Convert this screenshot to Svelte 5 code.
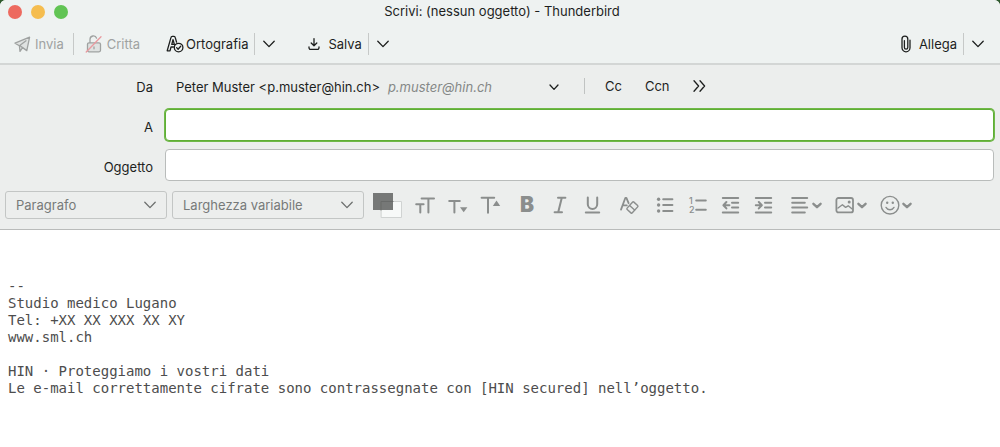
<script lang="ts">
	let from = $state('Peter Muster <p.muster@hin.ch>');
	let to = $state('');
	let subject = $state('');
	let paragraph = $state('Paragrafo');
	let font = $state('Larghezza variabile');
	let body = $state(
		[
			'--',
			'Studio medico Lugano',
			'Tel: +XX XX XXX XX XY',
			'www.sml.ch',
			'',
			'HIN · Proteggiamo i vostri dati',
			'Le e-mail correttamente cifrate sono contrassegnate con [HIN secured] nell’oggetto.',
		].join('\n')
	);
</script>

{#snippet chevron()}
	<svg class="chevron" width="12" height="8" viewBox="0 0 12 8" aria-hidden="true">
		<path d="M0.8 1.2 6 6.6 11.2 1.2" />
	</svg>
{/snippet}

{#snippet smallChevron()}
	<svg class="small-chevron" width="12" height="8" viewBox="0 0 12 8" aria-hidden="true">
		<path d="M2.4 2.8 6 6.2 9.6 2.8" />
	</svg>
{/snippet}

<main class="window">
	<header>
		<div class="titlebar">
			<div class="lights">
				<button class="light close" aria-label="Chiudi"></button>
				<button class="light minimize" aria-label="Riduci"></button>
				<button class="light zoom" aria-label="Ingrandisci"></button>
			</div>
			<h1>Scrivi: (nessun oggetto) - Thunderbird</h1>
		</div>

		<div class="toolbar">
			<button class="tool send" disabled>
				<svg width="17" height="17" viewBox="0 0 17 17" aria-hidden="true">
					<path d="M1 7.2 15.6 1.2 12.8 14.6 8.6 11.6 6 15.4 5.4 9.8Z" fill="#dfe2e1" />
					<path d="M5.4 9.8 12 4.8M8.6 11.6 6.4 10" />
				</svg>
				Invia
			</button>
			<span class="divider"></span>
			<button class="tool encrypt" disabled>
				<svg width="18" height="18" viewBox="0 0 18 18" aria-hidden="true">
					<rect x="2.5" y="7.8" width="13" height="9" rx="1.5" fill="#dfe2e1" />
					<path d="M5 7.6V4.4a3.4 3.4 0 0 1 6.6-1.2M9 12v1.8" />
					<path d="M1.2 17 16 1.8" stroke="#e99a9f" />
				</svg>
				Critta
			</button>
			<button class="tool spelling">
				<svg width="18" height="18" viewBox="0 0 18 18" aria-hidden="true">
					<path d="M1.2 15.8 5 2.4Q5.2 1.4 6.2 1.4H8Q9 1.4 9.2 2.4L10.6 7.2M4 15.8H1.2M4 15.8 5 12h2.4M5.8 9.4 7 4.6l1.4 4.8Z" />
					<circle cx="12.6" cy="12.6" r="4.3" />
					<path d="m10.6 12.6 1.5 1.6 2.6-3" />
				</svg>
				Ortografia
			</button>
			<span class="divider"></span>
			<button class="more" aria-label="Opzioni ortografia">{@render chevron()}</button>
			<button class="tool save">
				<svg width="12" height="14" viewBox="0 0 12 14" aria-hidden="true">
					<path d="M6 1.6v7M3.2 6 6 8.8 8.8 6M1 10v.8A1.6 1.6 0 0 0 2.6 12.4h6.8A1.6 1.6 0 0 0 11 10.8V10" />
				</svg>
				Salva
			</button>
			<span class="divider"></span>
			<button class="more" aria-label="Opzioni salvataggio">{@render chevron()}</button>
			<button class="tool attach">
				<svg width="10" height="18" viewBox="0 0 10 18" aria-hidden="true">
					<path d="M9 5.2v7.6a4 4 0 0 1-8 0V4a2.9 2.9 0 0 1 5.8 0v8.4a1.7 1.7 0 0 1-3.4 0V5.6" />
				</svg>
				Allega
			</button>
			<span class="divider"></span>
			<button class="more" aria-label="Opzioni allegati">{@render chevron()}</button>
		</div>
	</header>

	<section class="compose">
		<div class="fields">
			<label for="from">Da</label>
			<div class="from-row">
				<div class="dropdown identity">
					<select id="from" bind:value={from}>
						<option>Peter Muster &lt;p.muster@hin.ch&gt;</option>
					</select>
					<em>p.muster@hin.ch</em>
					<svg class="chevron" width="10" height="7" viewBox="0 0 10 7" aria-hidden="true">
						<path d="m1 1 4 4.4L9 1" />
					</svg>
				</div>
				<span class="short-divider"></span>
				<button class="recipient">Cc</button>
				<button class="recipient">Ccn</button>
				<button class="recipient" aria-label="Altri campi">
					<svg width="13" height="14" viewBox="0 0 13 14" aria-hidden="true">
						<path d="M1 1.8 5.6 7 1 12.2M7 1.8 11.6 7 7 12.2" />
					</svg>
				</button>
			</div>

			<label for="to">A</label>
			<input id="to" class="active" type="text" bind:value={to} />

			<label for="subject">Oggetto</label>
			<input id="subject" type="text" bind:value={subject} />
		</div>

		<div class="format">
			<div class="dropdown boxed">
				<select class="paragraph" aria-label="Formato paragrafo" bind:value={paragraph}>
					<option>Paragrafo</option>
				</select>
				{@render chevron()}
			</div>
			<div class="dropdown boxed">
				<select class="font" aria-label="Carattere" bind:value={font}>
					<option>Larghezza variabile</option>
				</select>
				{@render chevron()}
			</div>
			<button class="colors" aria-label="Colore del testo">
				<svg width="30" height="26" viewBox="0 0 30 26" aria-hidden="true">
					<rect x="9.5" y="9.5" width="20" height="16" fill="#f7f9f8" stroke="#d0d3d2" stroke-width="1" />
					<rect x="1" y="1" width="20" height="17" fill="#767877" stroke="none" />
					<path d="M9 18V9.5h12" stroke="#686a69" stroke-width="1" />
				</svg>
			</button>

			<div class="group">
				<button aria-label="Dimensione carattere">
					<svg width="22" height="22" viewBox="0 0 22 22" aria-hidden="true">
						<path d="M7.6 4.6H20M14.4 4.6v14M2.2 10.2h7.4M6.3 10.2v8.4" />
					</svg>
				</button>
				<button aria-label="Riduci carattere">
					<svg width="22" height="22" viewBox="0 0 22 22" aria-hidden="true">
						<path d="M2.2 7h10.6M7.4 7v11.6" />
						<path class="solid" d="M13 13.2h7.4l-3.7 5Z" />
					</svg>
				</button>
				<button aria-label="Ingrandisci carattere">
					<svg width="22" height="22" viewBox="0 0 22 22" aria-hidden="true">
						<path d="M1.6 3.8h12.6M8 3.8v15" />
						<path class="solid" d="M12.8 12h7.4l-3.7-5.4Z" />
					</svg>
				</button>
			</div>

			<div class="group">
				<button class="bold" aria-label="Grassetto">B</button>
				<button aria-label="Corsivo">
					<svg width="22" height="22" viewBox="0 0 22 22" aria-hidden="true">
						<path d="M9 3.8h7.4M5.6 18.2H13M12.8 3.8 9.2 18.2" />
					</svg>
				</button>
				<button aria-label="Sottolineato">
					<svg width="22" height="22" viewBox="0 0 22 22" aria-hidden="true">
						<path d="M5.8 3.4v6.8a4.7 4.7 0 0 0 9.4 0V3.4M3.8 18.6h13.4" />
					</svg>
				</button>
			</div>

			<div class="group">
				<button aria-label="Rimuovi formattazione">
					<svg width="22" height="22" viewBox="0 0 22 22" aria-hidden="true">
						<path d="M3 15.6 7.4 3.8h1l2.2 5.4M4.8 11.4h4" stroke-width="1.8" />
						<rect class="thin" x="9.4" y="10" width="10" height="7" rx="1" transform="rotate(-48 14.4 13.5)" />
						<path class="thin" d="m11.6 11.4 5 4.6" />
					</svg>
				</button>
			</div>

			<div class="group">
				<button aria-label="Elenco puntato">
					<svg width="22" height="22" viewBox="0 0 22 22" aria-hidden="true">
						<path d="M9.2 5.2h9.2M9.2 11h9.2M9.2 17h9.2" />
						<circle class="solid" cx="4.6" cy="5.2" r="1.7" />
						<circle class="solid" cx="4.6" cy="11" r="1.7" />
						<circle class="solid" cx="4.6" cy="17" r="1.7" />
					</svg>
				</button>
				<button aria-label="Elenco numerato">
					<svg width="22" height="22" viewBox="0 0 22 22" aria-hidden="true">
						<path d="M9.2 6.4h9.6M9.2 15.8h9.6" />
						<text x="2" y="10">1</text>
						<text x="2" y="19">2</text>
					</svg>
				</button>
				<button aria-label="Riduci rientro">
					<svg width="22" height="22" viewBox="0 0 22 22" aria-hidden="true">
						<path d="M2.8 4h15.4M12 8.8h6.2M12 13.6h6.2M2.8 18.4h15.4M3.6 11.2h5.8M6.4 8 3.4 11.2l3 3.2" />
					</svg>
				</button>
				<button aria-label="Aumenta rientro">
					<svg width="22" height="22" viewBox="0 0 22 22" aria-hidden="true">
						<path d="M2.8 4h15.4M12 8.8h6.2M12 13.6h6.2M2.8 18.4h15.4M2.8 11.2h5.8M5.8 8l3 3.2-3 3.2" />
					</svg>
				</button>
			</div>

			<div class="group">
				<button class="menu" aria-label="Allineamento">
					<svg width="22" height="22" viewBox="0 0 22 22" aria-hidden="true">
						<path d="M3.2 4h15M3.2 8.8h12.6M3.2 13.6h15M3.2 18.4h12.6" />
					</svg>
					{@render smallChevron()}
				</button>
				<button class="menu" aria-label="Inserisci">
					<svg width="22" height="22" viewBox="0 0 22 22" aria-hidden="true">
						<rect x="2.4" y="4" width="16.6" height="14.4" rx="2" stroke-width="1.8" />
						<path class="thin" d="m4 14 4.4-3.2 3.2 2.6 2.6-1.6 4 3.2" />
						<circle class="solid" cx="15.2" cy="8" r="1.5" />
					</svg>
					{@render smallChevron()}
				</button>
				<button class="menu" aria-label="Faccina">
					<svg width="22" height="22" viewBox="0 0 22 22" aria-hidden="true">
						<circle class="thin" cx="11" cy="11.2" r="8.8" />
						<path class="thin" d="M7 13.4a4.6 4.6 0 0 0 8 0" />
						<circle class="solid" cx="8.2" cy="8.8" r="1.2" />
						<circle class="solid" cx="13.8" cy="8.8" r="1.2" />
					</svg>
					{@render smallChevron()}
				</button>
			</div>
		</div>
	</section>

	<textarea class="editor" aria-label="Corpo del messaggio" spellcheck="false" bind:value={body}></textarea>
</main>

<style>
	:global(body) {
		margin: 0;
		background: #2f5a2e;
	}

	.window {
		display: flex;
		flex-direction: column;
		min-height: 100vh;
		border-radius: 6px 6px 0 0;
		overflow: hidden;
		background: #fff;
		color: #1d1f1e;
		font-family: Inter, 'Liberation Sans', sans-serif;
		font-size: 13px;
		line-height: 18px;
	}

	button,
	select,
	input {
		margin: 0;
		padding: 0;
		border: 0;
		background: none;
		color: inherit;
		font: inherit;
	}

	svg {
		display: block;
		flex: none;
		fill: none;
		stroke: currentColor;
		stroke-width: 1.3;
		stroke-linecap: round;
		stroke-linejoin: round;
	}

	header {
		background: #eef2f1;
		border-bottom: 2px solid #d3d6d5;
	}

	.titlebar {
		display: grid;
		grid-template-columns: 1fr auto 1fr;
		align-items: center;
		height: 24px;
		padding: 0 4px 0 8px;
	}

	.lights {
		display: flex;
		gap: 9px;
	}

	.light {
		width: 14px;
		height: 14px;
		border-radius: 50%;
	}

	.close {
		background: #ed6a5f;
	}

	.minimize {
		background: #f5bd4f;
	}

	.zoom {
		background: #61c454;
	}

	h1 {
		margin: 0 0 2px;
		font-size: 13px;
		font-weight: 400;
		line-height: 20px;
	}

	.toolbar {
		display: flex;
		align-items: center;
		box-sizing: border-box;
		height: 39px;
		padding: 1px 16px 0 14px;
	}

	.tool {
		display: flex;
		align-items: center;
		gap: 4px;
	}

	.tool:disabled {
		color: #9fa2a1;
	}

	.tool + .divider {
		margin-left: 6px;
	}

	.send + .divider {
		margin-left: 9px;
	}

	.encrypt {
		margin-left: 11px;
	}

	.spelling {
		gap: 2px;
		margin-left: 26px;
	}

	.save {
		gap: 8px;
		margin-left: 33px;
	}

	.attach {
		gap: 8px;
		margin-left: auto;
	}

	.divider {
		width: 1px;
		height: 22px;
		background: #c6c9c8;
	}

	.more {
		margin-left: 8px;
	}

	.compose {
		background: #eceeed;
		border-bottom: 1px solid #b9bbba;
	}

	.fields {
		display: grid;
		grid-template-columns: 153px 1fr;
		column-gap: 12px;
		row-gap: 8px;
		align-items: center;
		padding-right: 6px;
	}

	label {
		padding-top: 4px;
		text-align: right;
	}

	.from-row {
		display: flex;
		align-items: center;
		height: 36px;
	}

	label[for='from'] {
		padding-top: 8px;
	}

	.dropdown {
		display: grid;
		align-items: center;
	}

	.dropdown > * {
		grid-area: 1 / 1;
	}

	.dropdown select {
		appearance: none;
		outline: none;
	}

	.dropdown > em,
	.dropdown > svg {
		pointer-events: none;
		justify-self: end;
	}

	.identity {
		padding-top: 8px;
	}

	.identity select {
		width: 394px;
		padding-left: 11px;
	}

	.identity em {
		margin-right: 67px;
		color: #858887;
	}

	.short-divider {
		width: 1px;
		height: 16px;
		margin: 6px 0 0 25px;
		background: #c0c3c2;
	}

	.recipient {
		margin-left: 20px;
		padding-top: 6px;
	}

	.recipient + .recipient {
		margin-left: 23px;
	}

	input {
		box-sizing: border-box;
		width: 100%;
		height: 32px;
		padding: 0 8px;
		border: 1px solid #b9bcbb;
		border-radius: 4px;
		background: #fff;
		outline: none;
	}

	input.active {
		border-color: #5fae35;
		box-shadow: 0 0 0 1px #6fb848;
	}

	.format {
		display: flex;
		align-items: center;
		gap: 14px;
		padding: 10px 5px;
		color: #8b8e8d;
	}

	.boxed select {
		box-sizing: border-box;
		height: 28px;
		padding: 0 30px 0 10px;
		border: 1px solid #c3c6c5;
		border-radius: 3px;
		color: #777a79;
	}

	.boxed svg {
		margin-right: 11px;
		color: #6d706f;
	}

	.boxed + .boxed {
		margin-left: -9px;
	}

	.paragraph {
		width: 162px;
	}

	.font {
		width: 192px;
	}

	.colors {
		margin: 0 -2px 0 -6px;
	}

	.group {
		display: flex;
		align-items: center;
		gap: 11px;
	}

	.group button {
		display: flex;
		align-items: center;
		justify-content: center;
		width: 22px;
		height: 22px;
	}

	.group svg {
		stroke-width: 2;
	}

	.group .menu {
		width: 34px;
	}

	.group .thin {
		stroke-width: 1.4;
	}

	.group .solid {
		fill: currentColor;
		stroke: none;
	}

	.group text {
		fill: currentColor;
		stroke: none;
		font-size: 9px;
		font-weight: 500;
	}

	.group .bold {
		font-size: 21px;
		font-weight: 900;
	}

	.group .small-chevron {
		stroke-width: 2.4;
	}

	.editor {
		flex: 1;
		box-sizing: border-box;
		width: 100%;
		min-height: 200px;
		padding: 48px 8px 16px;
		border: 0;
		outline: none;
		resize: none;
		background: #fff;
		color: #4d4d4d;
		font-family: 'DejaVu Sans Mono', monospace;
		font-size: 14px;
		line-height: 17px;
	}
</style>
